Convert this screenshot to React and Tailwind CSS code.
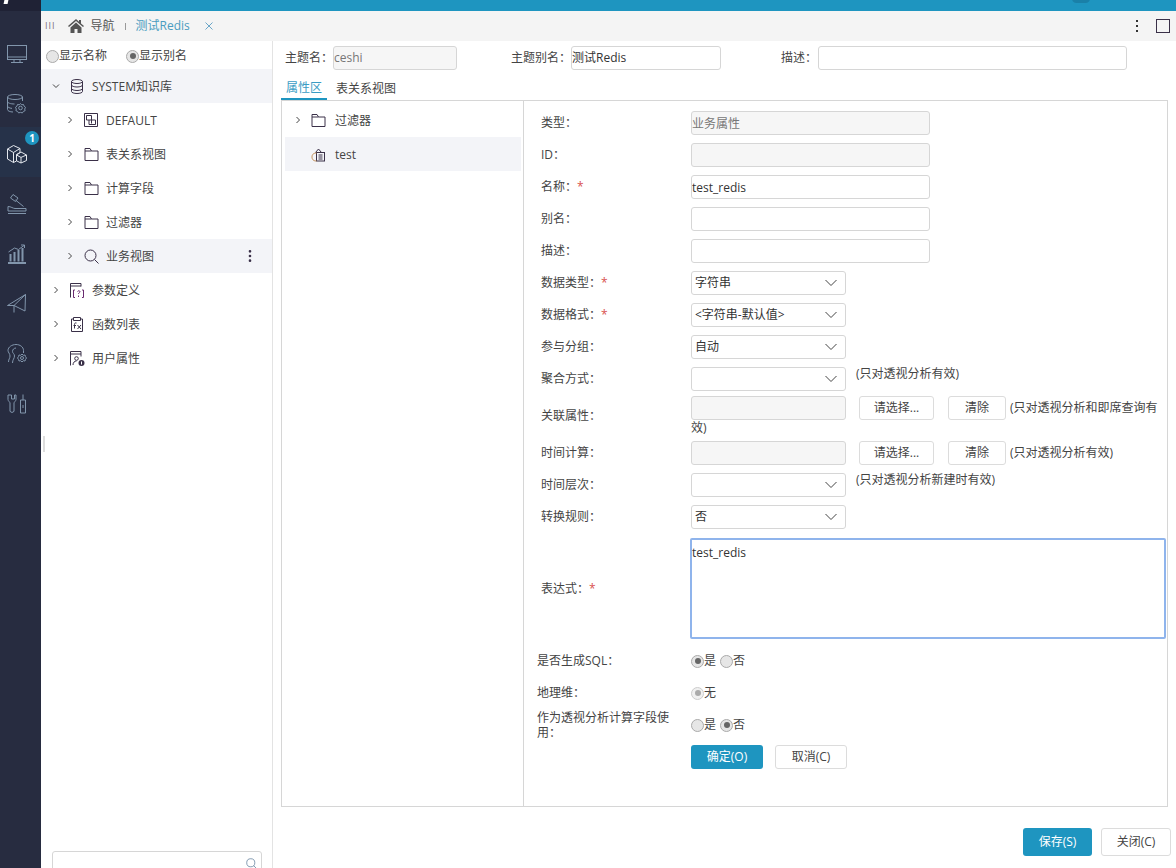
import { EllipsisVertical } from 'lucide-react';

const font = { fontFamily: '"Open Sans", "Noto Sans CJK SC", sans-serif' };

// --- icons ---
function Svg({ size = 15, box = 15, className = '', children }) {
  return (
    <svg width={size} height={size} viewBox={`0 0 ${box} ${box}`} fill="none" stroke="currentColor" strokeWidth="1" className={className}>
      {children}
    </svg>
  );
}

const railIcons = [
  <>
    <rect x="0.5" y="1.500" width="19" height="14" />
    <path d="M0.500 13h19M4 18.500h12M7 15.500v3M13 15.500v3" />
  </>,
  <>
    <ellipse cx="8" cy="3" rx="7.500" ry="2.500" />
    <path d="M.5 3v12.500c0 1.400 2.500 2.500 5.500 2.500M15.500 3v4M.5 7.500c0 1.400 3 2.500 7 2.500M.5 12c0 1.200 1.800 2.100 4.500 2.400" />
    <circle cx="13.500" cy="14" r="1.800" />
    <path d="M13.500 9.500l1.200 1.300 1.800-.3.600 1.700 1.400 1.100-.8 1.700.4 1.700-1.700.7-1 1.500-1.900-.5-1.900.5-1-1.500-1.700-.7.4-1.700-.8-1.700 1.400-1.100.6-1.700 1.800.3z" />
  </>,
  <>
    <path d="M6.500 1.500l6.500 3v4L9.500 10.500v6.500l-3 1.500L.5 15V5z" />
    <path d="M.5 5l6 3.500 6.500-4M6.500 8.500v10" />
    <path d="M14 8l5.500 3v5.500L14 19l-4.500-2.200V11z" />
    <path d="M9.500 11l4.500 2.400 5.500-2.400M14 13.400V19" />
  </>,
  <>
    <path d="M6 .5L11 4 8.500 7.500 3.500 4zM8.500 6l8 6.500" />
    <path d="M1 12.500c3 0 5 2 7 2h11v2.500H1z" />
    <path d="M1 19.500h18" />
  </>,
  <>
    <path d="M3.500 17.500V10M7.500 17.500V8M11.500 17.500V6M15.500 17.500V4" strokeWidth="2" />
    <path d="M1 19h18" strokeWidth="2" />
    <path d="M1.500 8l6-4 4 1.500L17 1.500M14 1h3.500v3" />
  </>,
  <>
    <path d="M.5 11.500L18.500 .5 18 17 7 11.500z" />
    <path d="M7 11.500L18.500 .5M7 11.500v7" />
  </>,
  <>
    <path d="M1.500 18c0-3 1.500-3.500 1.500-6S1 8.500 1 6.500C1 3 5 .5 9 .5s7.500 2.500 7.500 6v2.500" />
    <path d="M5.500 19c0-3.500 2-4.500 2-7s-2-2.500-2-4.500C5.500 5.500 7 4 9 4" />
    <path d="M15 10l1.300 1.300 1.700-.3.500 1.700 1 1.300-1 1.300-.5 1.700-1.700-.3L15 18l-1.300-1.300-1.700.3-.5-1.700-1-1.300 1-1.300.5-1.700 1.700.3z" />
    <circle cx="15" cy="14" r="1.500" />
  </>,
  <>
    <path d="M1 1v4.500c0 1.500 2 2.500 2 3.500v8c0 1.800 4 1.800 4 0V9c0-1 2-2 2-3.500V1H7.500v4h-3V1z" />
    <path d="M16 .5v5.500M13.500 6h5v13h-5zM16 11v3" />
  </>,
];

const Chevron = ({ open, className = '' }) => (
  <svg width="8" height="8" viewBox="0 0 8 8" fill="none" stroke="#444" strokeWidth="1" className={className}>
    {open ? <path d="M1 2.500L4 5.500 7 2.500" /> : <path d="M2.500 1L5.500 4 2.500 7" />}
  </svg>
);

const ink = '#3a3048';

const Folder = () => (
  <Svg>
    <path d="M1 13.500V1.500h5l1.500 2.500h6.500v9.500zM1 4h6.500" stroke={ink} />
  </Svg>
);

const Db = () => (
  <Svg>
    <ellipse cx="7" cy="2.500" rx="5.500" ry="2" stroke={ink} />
    <path d="M1.500 2.500v10c0 1.100 2.500 2 5.500 2s5.500-.9 5.500-2v-10M1.500 6c0 1.100 2.500 2 5.500 2s5.500-.9 5.500-2M1.500 9.500c0 1.100 2.500 2 5.500 2s5.500-.9 5.500-2" stroke={ink} />
  </Svg>
);

const TableIcon = () => (
  <Svg>
    <path d="M.5.500h13v13H.5zM2.500 2.500h5v8M2.500 2.500v4.500h9v4.500H5V7" stroke={ink} />
  </Svg>
);

const SearchIcon = ({ size = 15, color = ink }) => (
  <svg width={size} height={size} viewBox="0 0 15 15" fill="none" stroke={color} strokeWidth="1">
    <circle cx="6.500" cy="6.500" r="5.500" />
    <path d="M10.500 10.500l4 4" />
  </svg>
);

const ParamIcon = () => (
  <Svg>
    <path d="M.5 14.500V.5h10.500v3M.5 3h10.500" stroke={ink} />
    <path d="M5 7H3.500v7.500H5M12 7h1.500v7.500H12" stroke="#6a2a70" />
    <path d="M7.500 8.500c.5-1 2.500-1 2.500.2 0 1-1.500 1-1.500 2.300M8.500 12.500v1.500" stroke="#6a2a70" />
  </Svg>
);

const FuncIcon = () => (
  <Svg>
    <path d="M3.500 2H1.500v12.500h11V2h-2M3.500 3.500V.5h7v3z" stroke={ink} />
    <path d="M6.500 6c-1.500-.5-2 .5-2 1.500v4M3.500 8.500H6M7.500 8l3.500 4M11 8l-3.500 4" stroke={ink} />
  </Svg>
);

const UserIcon = () => (
  <Svg>
    <path d="M.5 14.500V.5h10.500v5M.5 3h10.500" stroke={ink} />
    <circle cx="6.500" cy="7.500" r="1.800" stroke={ink} />
    <path d="M3 14c0-2.500 1.500-4 3.500-4" stroke={ink} />
    <circle cx="11.500" cy="12" r="3" fill={ink} stroke="none" />
    <path d="M11.500 10.500v3" stroke="#fff" />
  </Svg>
);

const TestIcon = () => (
  <Svg>
    <path d="M4.500 5.500L7.500 2l3 3.500" stroke={ink} />
    <rect x="5.500" y="5.500" width="8" height="8.500" stroke={ink} />
    <path d="M7.500 8h4M7.500 10h4M7.500 12h4" stroke={ink} />
    <path d="M5.500 6C2 6 1 8 1 10s1 4 4.500 4" stroke="#c08a50" />
  </Svg>
);

// --- form bits ---
const boxClass = 'h-[24px] rounded-[3px] border border-[#d6d6d6] text-[12px] text-[#333] outline-none';

function TextBox({ value = '', width = 'w-[239px]', disabled }) {
  return (
    <input
      readOnly
      value={value}
      style={font}
      className={`${boxClass} ${width} ${disabled ? 'bg-[#f6f6f6] text-[#777]' : 'bg-white'}`}
    />
  );
}

function Dropdown({ value }) {
  return (
    <div className={`${boxClass} flex w-[155px] items-center justify-between bg-white pl-[3px] pr-[7px]`}>
      <span>{value}</span>
      <svg width="14" height="8" viewBox="0 0 14 8" fill="none" stroke="#444" strokeWidth="1">
        <path d="M1.500 1L7 6.500 12.500 1" />
      </svg>
    </div>
  );
}

function Radio({ checked, disabled, label }) {
  return (
    <label className="flex items-center text-[12px] text-[#444]">
      <span className={`flex h-[13px] w-[13px] items-center justify-center rounded-full border ${disabled ? 'border-[#ccc] bg-[#f0f0f0]' : 'border-[#aaa] bg-[#e6e6e6]'}`}>
        {checked && <span className={`h-[6px] w-[6px] rounded-full ${disabled ? 'bg-[#aaa]' : 'bg-[#666]'}`} />}
      </span>
      {label}
    </label>
  );
}

function Row({ label, required, height = 'h-[32px]', labelClass = 'pl-[17px]', children }) {
  return (
    <div className={`flex items-center ${height}`}>
      <div className={`w-[167px] shrink-0 text-[12px] text-[#444] ${labelClass}`}>
        {label}：{required && <span className="text-[#d9534f]">*</span>}
      </div>
      {children}
    </div>
  );
}

const Note = ({ children, className = '' }) => (
  <span className={`text-[12px] text-[#444] ${className}`}>{children}</span>
);

const Btn = ({ children, primary, className = '' }) => (
  <button
    style={font}
    className={`shrink-0 rounded-[3px] text-[12px] ${primary ? 'bg-[#1e95c0] text-white' : 'border border-[#dcdcdc] bg-white text-[#444]'} ${className}`}
  >
    {children}
  </button>
);

function TreeRow({ indent, open, icon, label, active, more }) {
  return (
    <div className={`flex h-[34px] items-center text-[12px] text-[#444] ${active ? 'bg-[#f3f4f8]' : ''}`}>
      <div className={`flex items-center ${indent ? 'pl-[25px]' : 'pl-[11px]'}`}>
        <Chevron open={open} />
      </div>
      <div className="ml-[10px] flex w-[15px] justify-center">{icon}</div>
      <span className="ml-[7px] flex-1 pt-[2px]">{label}</span>
      {more && <EllipsisVertical size={16} className="mr-[14px] text-[#3a3048]" />}
    </div>
  );
}

export default function App() {
  return (
    <div style={font} className="relative flex h-[868px] w-[1176px] overflow-hidden bg-white">
      {/* Icon rail */}
      <div className="flex w-[41px] shrink-0 flex-col bg-[#272c40]">
        <div className="relative h-[11px] bg-[#1f2235]">
          <div className="absolute left-[4px] top-0 h-[4px] w-[4px] -skew-x-12 bg-white" />
        </div>
        <div className="h-[16px]" />
        {railIcons.map((icon, i) => (
          <div
            key={i}
            className={`relative flex h-[50px] items-center pl-[7px] pt-[4px] ${i === 2 ? 'bg-[#263249] text-[#e4e8ee]' : 'text-[#8296ac]'}`}
          >
            <Svg size={20} box={20}>{icon}</Svg>
            {i === 2 && (
              <span className="absolute right-[2px] top-[4px] flex h-[14px] w-[14px] items-center justify-center rounded-full bg-[#1e95c0] text-[10px] font-bold text-white">
                1
              </span>
            )}
          </div>
        ))}
      </div>

      <div className="flex min-w-0 flex-1 flex-col">
        {/* Top strip */}
        <div className="relative h-[11px] bg-[#1e95c0]">
          <div className="absolute left-[1031px] top-[-6px] h-[9px] w-[18px] rounded-full bg-[#1a80a8]" />
        </div>

        {/* Tabs */}
        <div className="flex h-[30px] items-center bg-[#f4f4f4] text-[12px]">
          <span className="ml-[4px] text-[9px] tracking-[1px] text-[#7a6a80]">III</span>
          <svg width="16" height="14" viewBox="0 0 16 14" className="ml-[12px] text-[#555]" fill="currentColor">
            <path d="M8 0L0 7l1 1 7-6 7 6 1-1-3-2.600V1h-2v1.700zM2.500 8.500V14h4v-4h3v4h4V8.500L8 3.500z" />
          </svg>
          <span className="ml-[7px] text-[#555]">导航</span>
          <span className="ml-[10px] h-[7px] w-px bg-[#999]" />
          <span className="ml-[10px] text-[#4a9cc0]">测试Redis</span>
          <svg width="8" height="8" viewBox="0 0 8 8" className="ml-[15px]" stroke="#6aa6c8" fill="none">
            <path d="M.5.5l7 7M7.500.5l-7 7" />
          </svg>
          <div className="ml-auto mr-[6px] flex items-center">
            <span className="flex flex-col gap-[3px]">
              <span className="h-[2px] w-[2px] bg-[#333]" />
              <span className="h-[2px] w-[2px] bg-[#333]" />
              <span className="h-[2px] w-[2px] bg-[#333]" />
            </span>
            <span className="ml-[18px] h-[14px] w-[14px] border border-[#3a3048]" />
          </div>
        </div>

        <div className="flex min-h-0 flex-1">
          {/* Left tree */}
          <div className="flex w-[232px] shrink-0 flex-col border-r border-[#e3e3e3]">
            <div className="flex h-[28px] items-center gap-[19px] pl-[5px] pt-[2px]">
              <Radio label="显示名称" />
              <Radio checked label="显示别名" />
            </div>
            <div className="flex-1">
              <TreeRow open icon={<Db />} label="SYSTEM知识库" active />
              <TreeRow indent icon={<TableIcon />} label="DEFAULT" />
              <TreeRow indent icon={<Folder />} label="表关系视图" />
              <TreeRow indent icon={<Folder />} label="计算字段" />
              <TreeRow indent icon={<Folder />} label="过滤器" />
              <TreeRow indent icon={<SearchIcon />} label="业务视图" active more />
              <TreeRow icon={<ParamIcon />} label="参数定义" />
              <TreeRow icon={<FuncIcon />} label="函数列表" />
              <TreeRow icon={<UserIcon />} label="用户属性" />
            </div>
            <div className="mb-[-7px] ml-[11px] flex h-[24px] w-[210px] items-center justify-end rounded-[3px] border border-[#d6d6d6] pr-[4px]">
              <SearchIcon size={11} color="#5a7a98" />
            </div>
          </div>

          {/* Main */}
          <div className="flex min-w-0 flex-1 flex-col pl-[8px] pr-[8px]">
            <div className="flex h-[37px] items-start pt-[5px] text-[12px] leading-[24px] text-[#444]">
              <span className="ml-[4px] w-[48px]">主题名：</span>
              <TextBox value="ceshi" width="w-[124px]" disabled />
              <span className="ml-[54px] w-[60px]">主题别名：</span>
              <TextBox value="测试Redis" width="w-[150px]" />
              <span className="ml-[60px] w-[37px]">描述：</span>
              <TextBox width="w-[309px]" />
            </div>
            <div className="flex h-[22px] items-end text-[12px]">
              <span className="flex h-[22px] w-[46px] items-center justify-center border-b-2 border-[#1e95c0] text-[#3a9cc4]">
                属性区
              </span>
              <span className="ml-[9px] flex h-[22px] items-center text-[#444]">表关系视图</span>
            </div>

            <div className="flex h-[707px] border border-[#d6d6d6]">
              <div className="w-[242px] shrink-0 border-r border-[#d6d6d6] pl-[3px] pr-[2px] pt-[2px]">
                <div className="flex h-[34px] items-center text-[12px] text-[#444]">
                  <Chevron className="ml-[9px]" />
                  <div className="ml-[9px]"><Folder /></div>
                  <span className="ml-[9px] pt-[2px]">过滤器</span>
                </div>
                <div className="flex h-[34px] items-center bg-[#f3f4f8] text-[12px] text-[#444]">
                  <div className="ml-[26px]"><TestIcon /></div>
                  <span className="ml-[9px] pt-[2px]">test</span>
                </div>
              </div>

              <div className="min-w-0 flex-1 pt-[6px]">
                <Row label="类型"><TextBox value="业务属性" disabled /></Row>
                <Row label="ID"><TextBox disabled /></Row>
                <Row label="名称" required><TextBox value="test_redis" /></Row>
                <Row label="别名"><TextBox /></Row>
                <Row label="描述"><TextBox /></Row>
                <Row label="数据类型" required><Dropdown value="字符串" /></Row>
                <Row label="数据格式" required><Dropdown value="<字符串-默认值>" /></Row>
                <Row label="参与分组"><Dropdown value="自动" /></Row>
                <Row label="聚合方式">
                  <Dropdown value="" />
                  <Note className="mb-[10px] ml-[10px]">(只对透视分析有效)</Note>
                </Row>
                <Row label="关联属性" height="h-[42px]">
                  <div className="flex flex-col">
                    <div className="flex h-[24px] items-center">
                      <TextBox disabled width="w-[155px]" />
                      <Btn className="ml-[13px] h-[24px] w-[75px]">请选择...</Btn>
                      <Btn className="ml-[14px] h-[24px] w-[58px]">清除</Btn>
                      <Note className="ml-[4px] whitespace-nowrap">(只对透视分析和即席查询有</Note>
                    </div>
                    <Note className="leading-[16px]">效)</Note>
                  </div>
                </Row>
                <Row label="时间计算">
                  <TextBox disabled width="w-[155px]" />
                  <Btn className="ml-[13px] h-[24px] w-[75px]">请选择...</Btn>
                  <Btn className="ml-[14px] h-[24px] w-[58px]">清除</Btn>
                  <Note className="ml-[4px] whitespace-nowrap">(只对透视分析有效)</Note>
                </Row>
                <Row label="时间层次">
                  <Dropdown value="" />
                  <Note className="mb-[10px] ml-[10px]">(只对透视分析新建时有效)</Note>
                </Row>
                <Row label="转换规则"><Dropdown value="否" /></Row>
                <Row label="表达式" required height="h-[112px]">
                  <textarea
                    readOnly
                    value="test_redis"
                    style={font}
                    className="mb-[2px] ml-[-1px] h-[101px] w-[476px] resize-none rounded-[2px] border-2 border-[#8fb4ec] py-[4px] text-[12px] text-[#333] outline-none"
                  />
                </Row>
                <Row label="是否生成SQL" labelClass="pl-[13px]">
                  <Radio checked label="是" />
                  <span className="ml-[4px]"><Radio label="否" /></span>
                </Row>
                <Row label="地理维" labelClass="pl-[13px]">
                  <Radio checked disabled label="无" />
                </Row>
                <Row label="作为透视分析计算字段使用" labelClass="pl-[13px] pr-[20px] leading-[15px]">
                  <Radio label="是" />
                  <span className="ml-[4px]"><Radio checked label="否" /></span>
                </Row>
                <div className="ml-[167px] flex h-[29px] items-center pt-[2px]">
                  <Btn primary className="h-[24px] w-[72px]">确定(O)</Btn>
                  <Btn className="ml-[12px] h-[24px] w-[72px]">取消(C)</Btn>
                </div>
              </div>
            </div>

            <div className="mr-[-3px] flex justify-end pt-[21px]">
              <Btn primary className="h-[28px] w-[69px]">保存(S)</Btn>
              <Btn className="ml-[9px] h-[28px] w-[70px]">关闭(C)</Btn>
            </div>
          </div>
        </div>
      </div>

      {/* Splitter handle */}
      <div className="absolute left-[43px] top-[436px] h-[16px] w-[2px] bg-[#ddd]" />
    </div>
  );
}
